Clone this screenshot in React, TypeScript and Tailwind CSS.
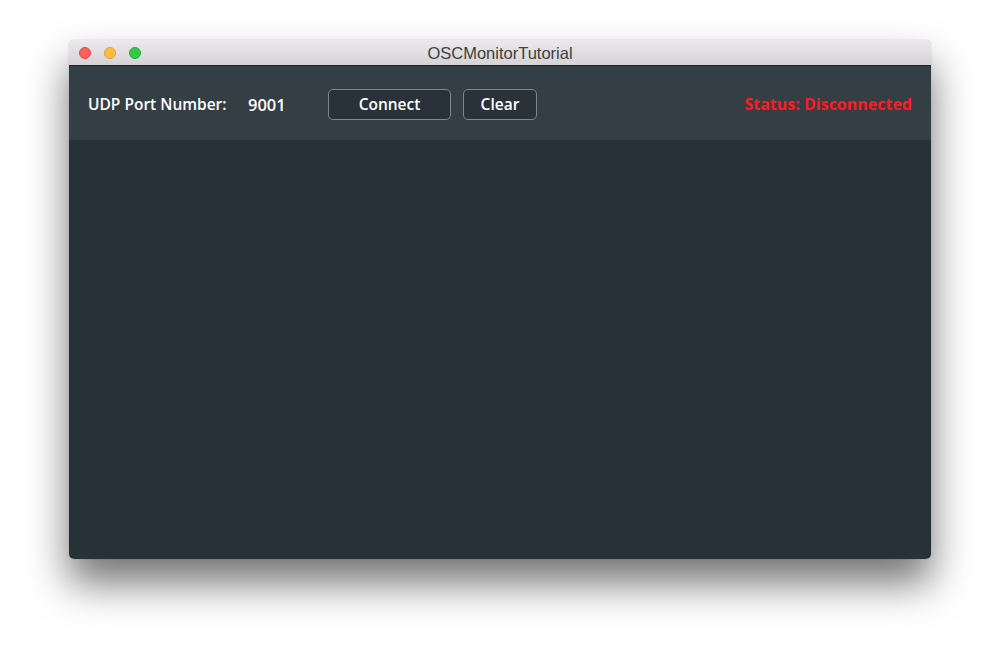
import React from "react";

export default function App() {
  return (
    <div className="w-[1000px] h-[658px] bg-white overflow-hidden pt-[40px] pl-[69px]">
      <div className="w-[862px] h-[519px] flex flex-col rounded-[5px] overflow-hidden shadow-[0_24px_40px_rgba(0,0,0,0.55),0_0_1px_rgba(0,0,0,0.4)]">
        <div className="h-[26px] flex items-center relative bg-gradient-to-b from-[#ebe9eb] to-[#d5d3d5] border-b border-[#1b2227]">
          <div className="flex items-center gap-[13px] pl-[10px]">
            <div className="w-[12px] h-[12px] rounded-full bg-[#fc605c] border border-[#de4a46]" />
            <div className="w-[12px] h-[12px] rounded-full bg-[#fdbc40] border border-[#dea236]" />
            <div className="w-[12px] h-[12px] rounded-full bg-[#34c84a] border border-[#27aa35]" />
          </div>
          <div className="absolute inset-0 flex items-center justify-center pt-[1px] text-[16.5px] text-[#404040] font-['Liberation_Sans',sans-serif]">
            OSCMonitorTutorial
          </div>
        </div>
        <div className="h-[74px] bg-[#343e45] flex items-center pt-[2px] pl-[19px] pr-[19px] font-['Open_Sans',sans-serif] text-[15.5px] font-semibold text-white">
          <span className="w-[160px] pt-[2px]">UDP Port Number:</span>
          <span className="w-[80px] pt-[2px] text-[16.5px]">9001</span>
          <button className="w-[123px] h-[31px] pt-[2px] rounded-[5px] border border-[#7d878c] bg-[#283238] text-white">Connect</button>
          <button className="w-[74px] h-[31px] pt-[2px] rounded-[5px] border border-[#7d878c] bg-[#283238] text-white ml-[12px]">Clear</button>
          <span className="ml-auto text-[#ff1a22] font-bold text-[16px]">Status: Disconnected</span>
        </div>
        <div className="flex-1 bg-[#273238]" />
      </div>
    </div>
  );
}
